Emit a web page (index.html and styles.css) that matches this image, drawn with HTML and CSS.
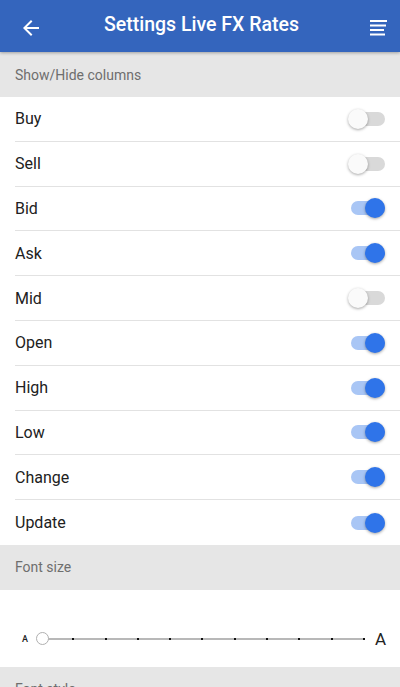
FILE: index.html
```html
<!DOCTYPE html>
<html lang="en">
<head>
    <meta charset="UTF-8">
    <meta name="viewport" content="width=device-width, initial-scale=1.0">
    <title>Settings Live FX Rates</title>
    <link rel="stylesheet" href="styles.css">
</head>
<body>

    <header class="app-bar">
        <svg class="bar-icon" width="24" height="24" viewBox="0 0 24 24">
            <path d="M20 11H7.83l5.59-5.59L12 4l-8 8 8 8 1.41-1.41L7.83 13H20v-2z" fill="#fff"/>
        </svg>
        <h1 class="bar-title">Settings Live FX Rates</h1>
        <svg class="bar-icon" width="24" height="24" viewBox="0 0 24 24">
            <rect x="4" y="4" width="17" height="2" fill="#fff"/>
            <rect x="4" y="8.5" width="16" height="2" fill="#fff"/>
            <rect x="4" y="13" width="14" height="2" fill="#fff"/>
            <rect x="4" y="17.5" width="15" height="2" fill="#fff"/>
        </svg>
    </header>

    <div class="section-head">Show/Hide columns</div>

    <ul class="column-list">
        <li class="row"><span>Buy</span><span class="switch"></span></li>
        <li class="row"><span>Sell</span><span class="switch"></span></li>
        <li class="row"><span>Bid</span><span class="switch on"></span></li>
        <li class="row"><span>Ask</span><span class="switch on"></span></li>
        <li class="row"><span>Mid</span><span class="switch"></span></li>
        <li class="row"><span>Open</span><span class="switch on"></span></li>
        <li class="row"><span>High</span><span class="switch on"></span></li>
        <li class="row"><span>Low</span><span class="switch on"></span></li>
        <li class="row"><span>Change</span><span class="switch on"></span></li>
        <li class="row"><span>Update</span><span class="switch on"></span></li>
    </ul>

    <div class="section-head">Font size</div>

    <div class="font-slider">
        <span class="a-small">A</span>
        <div class="slider-track">
            <span class="slider-thumb"></span>
            <span class="tick"></span><span class="tick"></span><span class="tick"></span><span class="tick"></span><span class="tick"></span>
            <span class="tick"></span><span class="tick"></span><span class="tick"></span><span class="tick"></span><span class="tick"></span>
        </div>
        <span class="a-big">A</span>
    </div>

    <div class="section-head">Font style</div>

</body>
</html>
```

FILE: styles.css
```css
body {
    margin: 0;
    font-family: Roboto, "Noto Sans", sans-serif;
    background-color: #ffffff;
    color: #212121;
}

.app-bar {
    display: flex;
    align-items: center;
    height: 52px;
    padding: 0 10px 0 19px;
    background-color: #3465bd;
    box-shadow: 0 1px 3px rgba(0,0,0,0.3);
    position: relative;
    z-index: 1;
}

.bar-icon {
    display: block;
    flex: none;
    margin-top: 3px;
}

.bar-title {
    flex: 1;
    margin: 0 6px 3px 0;
    font-size: 19.5px;
    font-weight: 500;
    color: #ffffff;
    text-align: center;
}

.section-head {
    height: 45px;
    display: flex;
    align-items: center;
    padding-left: 15px;
    background-color: #e6e6e6;
    color: #6e6e6e;
    font-size: 14px;
}

.column-list {
    list-style: none;
    margin: 0;
    padding: 0;
}

.row {
    box-sizing: border-box;
    height: 44.8px;
    margin-left: 15px;
    padding-right: 15px;
    display: flex;
    align-items: center;
    justify-content: space-between;
    border-bottom: 1px solid #e2e2e2;
    font-size: 16px;
}

.row:last-child {
    border-bottom: none;
}

/* android style switch */
.switch {
    position: relative;
    width: 37px;
    height: 20px;
}

.switch::before {
    content: "";
    position: absolute;
    left: 3px;
    right: 0;
    top: 3px;
    height: 14px;
    border-radius: 7px;
    background-color: #d9d9d9;
}

.switch::after {
    content: "";
    position: absolute;
    left: 0;
    top: 0;
    width: 20px;
    height: 20px;
    border-radius: 50%;
    background-color: #fafafa;
    box-shadow: 0 1px 3px rgba(0,0,0,0.35);
}

.switch.on::before {
    background-color: #a9c6f5;
}

.switch.on::after {
    left: 17px;
    background-color: #2f74e9;
}

.font-slider {
    box-sizing: border-box;
    height: 77px;
    display: flex;
    align-items: center;
    padding: 21px 14px 0 22px;
}

.a-small {
    font-size: 9px;
    font-weight: 500;
    color: #222;
    width: 13px;
}

.slider-track {
    position: relative;
    flex: 1;
    margin: 0 11px 0 6px;
    display: grid;
    grid-template-columns: repeat(10, 1fr);
    align-items: center;
    height: 2px;
    background-color: #b8b8b8;
}

.tick {
    justify-self: end;
    width: 2px;
    height: 2px;
    margin-right: -1px;
    background-color: #111;
}

.slider-thumb {
    position: absolute;
    left: -5.5px;
    top: -5.5px;
    box-sizing: border-box;
    width: 13px;
    height: 13px;
    border: 1.5px solid #b0b0b0;
    border-radius: 50%;
    background-color: #fff;
}

.a-big {
    font-size: 17px;
    color: #222;
}
```
